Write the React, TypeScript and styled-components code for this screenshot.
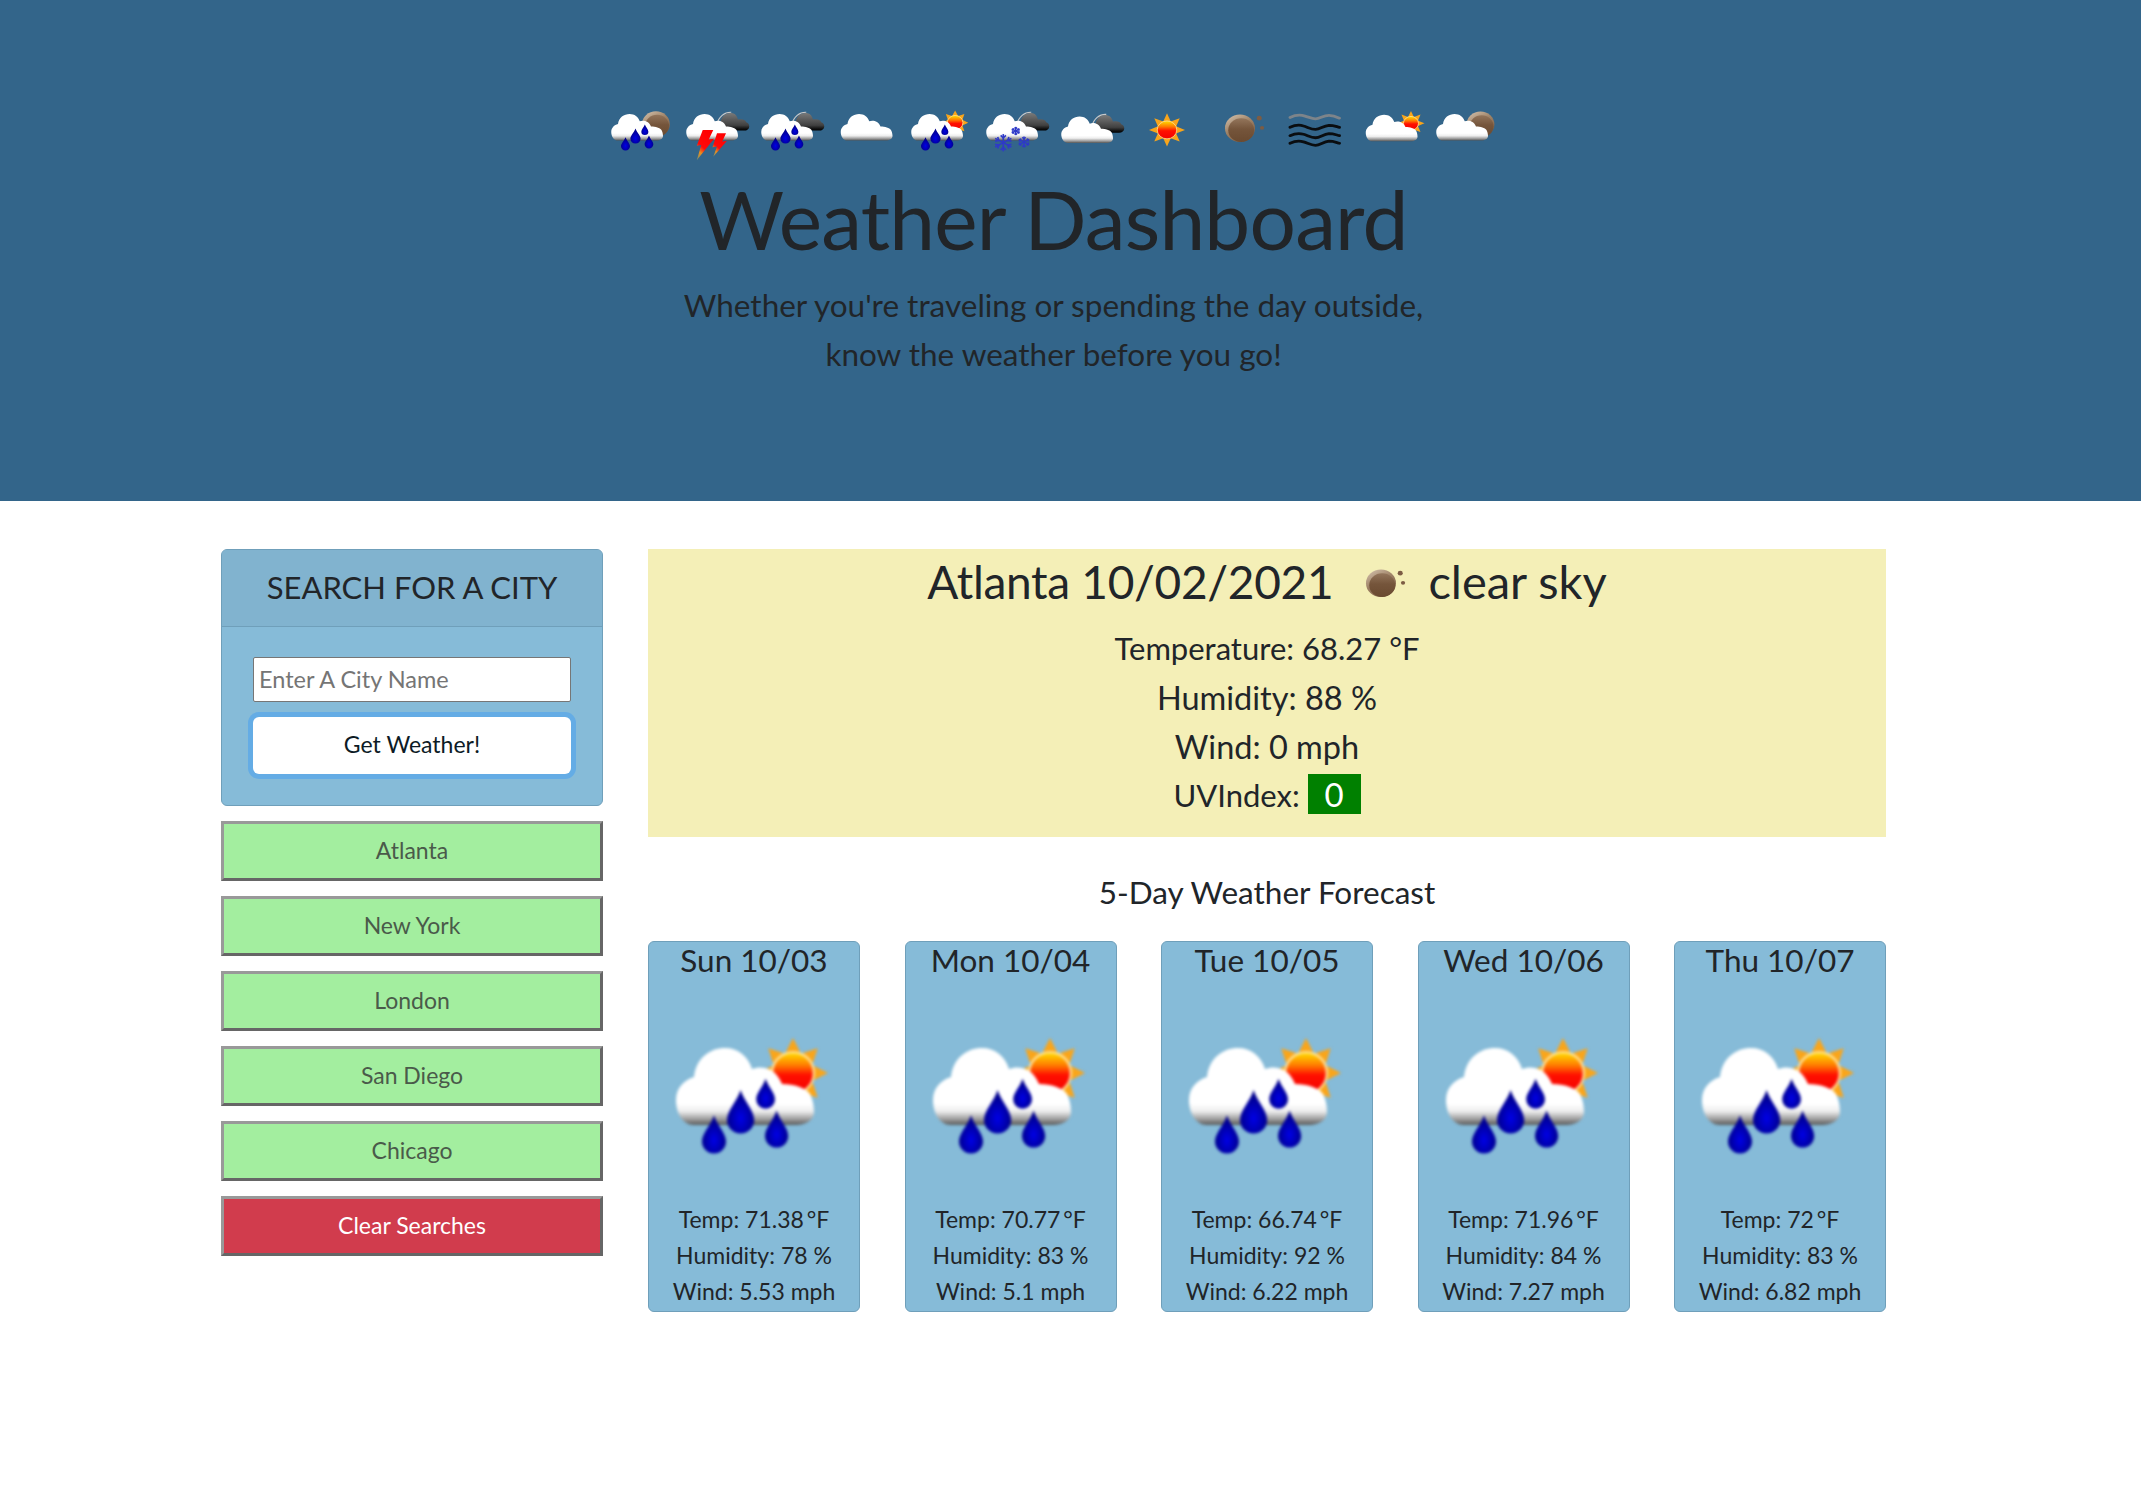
import { styled, createGlobalStyle } from "styled-components";

type IconKind = "10n" | "11d" | "09d" | "03d" | "10d" | "13d" | "04d" | "01d" | "01n" | "50d" | "02d" | "02n";

const headerIcons: IconKind[] = ["10n", "11d", "09d", "03d", "10d", "13d", "04d", "01d", "01n", "50d", "02d", "02n"];

const cities = ["Atlanta", "New York", "London", "San Diego", "Chicago"];

const forecast = [
  { date: "Sun 10/03", temp: "71.38", humidity: "78", wind: "5.53" },
  { date: "Mon 10/04", temp: "70.77", humidity: "83", wind: "5.1" },
  { date: "Tue 10/05", temp: "66.74", humidity: "92", wind: "6.22" },
  { date: "Wed 10/06", temp: "71.96", humidity: "84", wind: "7.27" },
  { date: "Thu 10/07", temp: "72", humidity: "83", wind: "6.82" },
];

const CLOUD =
  "M20 67.5 C14 67.5 11 61 11 55 C11 49 15 45 20 43.5 C21 34 28 29 35.5 29 C42 29 47 33 49 39.5 C54 37.5 61 39 64 47 C70 47 76 49 78 52 C80 56 80 60 80 61 C80 65 76 67.5 71 67.5 Z";
const DARK_CLOUD =
  "M56 53 C52 48 54 42 57 40 C58 31 66 26 73 28 C77 29 79 33 80 37 C85 36 90 37 91 41 C94 42 95 45 95 47 C95 51 92 53 88 53 Z";

const Drop = ({ x, y, r }: { x: number; y: number; r: number }) => (
  <path
    d={`M${x} ${y - r * 2.2} C${x + r * 0.3} ${y - r * 1.3} ${x + r} ${y - r * 0.7} ${x + r} ${y} A${r} ${r} 0 1 1 ${x - r} ${y} C${x - r} ${y - r * 0.7} ${x - r * 0.3} ${y - r * 1.3} ${x} ${y - r * 2.2} Z`}
    fill="url(#dropFill)"
  />
);

const Sun = ({ x, y, r, ray }: { x: number; y: number; r: number; ray: number }) => (
  <g>
    {[0, 45, 90, 135, 180, 225, 270, 315].map((a) => (
      <path
        key={a}
        d={`M${x - r * 0.42} ${y - r * 0.85} L${x} ${y - ray} L${x + r * 0.42} ${y - r * 0.85} Z`}
        fill="#f9a51a"
        transform={`rotate(${a} ${x} ${y})`}
      />
    ))}
    <circle cx={x} cy={y} r={r} fill="url(#sunFill)" stroke="#ffe9a8" strokeWidth="1" />
  </g>
);

const Moon = ({ x, y, r }: { x: number; y: number; r: number }) => (
  <g>
    <circle cx={x} cy={y} r={r} fill="url(#moonRim)" />
    <circle cx={x + r * 0.08} cy={y + r * 0.14} r={r * 0.86} fill="url(#moonFill)" />
  </g>
);

const Cloud = ({ dx = 0, dy = 0 }: { dx?: number; dy?: number }) => (
  <path d={CLOUD} fill="url(#cloudFill)" transform={`translate(${dx} ${dy})`} />
);

const DarkCloud = ({ dy = 0 }: { dy?: number }) => (
  <g transform={`translate(0 ${dy})`}>
    <path d="M52 44 C54 33 62 26 71 26.5" fill="none" stroke="#c9c9c9" strokeWidth="1.6" />
    <path d={DARK_CLOUD} fill="url(#darkFill)" />
  </g>
);

const Rain = () => (
  <g>
    <Drop x={43.3} y={65} r={6.8} />
    <Drop x={55.8} y={54.7} r={4.7} />
    <Drop x={61.3} y={73} r={5.8} />
    <Drop x={30} y={75.8} r={6} />
  </g>
);

const Flake = ({ x, y, r }: { x: number; y: number; r: number }) => (
  <g stroke="#2f3ac8" strokeWidth={r > 8 ? 2.2 : 2} fill="none">
    {[0, 60, 120, 180, 240, 300].map((a) => (
      <g key={a} transform={`rotate(${a} ${x} ${y})`}>
        <line x1={x} y1={y} x2={x} y2={y - r} />
        <path d={`M${x - r * 0.28} ${y - r * 0.85} L${x} ${y - r * 0.55} L${x + r * 0.28} ${y - r * 0.85}`} />
      </g>
    ))}
  </g>
);

const WeatherIcon = ({ kind }: { kind: IconKind }) => {
  switch (kind) {
    case "01d":
      return <Sun x={52} y={52} r={13} ray={24} />;
    case "01n":
      return (
        <g>
          <Moon x={49.3} y={49.7} r={20} />
          <circle cx={75} cy={35} r={3.4} fill="#7c5c44" />
          <circle cx={78.7} cy={49} r={2.8} fill="#7c5c44" />
        </g>
      );
    case "02d":
      return (
        <g>
          <Sun x={77.3} y={42.5} r={10} ray={18} />
          <Cloud dx={6} dy={1} />
        </g>
      );
    case "02n":
      return (
        <g>
          <Moon x={70} y={44} r={18.5} />
          <Cloud />
        </g>
      );
    case "03d":
      return <Cloud dx={6} />;
    case "04d":
      return (
        <g>
          <DarkCloud dy={3} />
          <Cloud dy={3.5} />
        </g>
      );
    case "09d":
      return (
        <g>
          <DarkCloud />
          <Cloud />
          <Rain />
        </g>
      );
    case "10d":
      return (
        <g>
          <Sun x={69.5} y={41.5} r={10.4} ray={17.5} />
          <Cloud />
          <Rain />
        </g>
      );
    case "10n":
      return (
        <g>
          <Moon x={70.6} y={43.5} r={18.5} />
          <Cloud />
          <Rain />
        </g>
      );
    case "11d":
      return (
        <g>
          <DarkCloud />
          <Cloud />
          <path d="M33 52 L47 52 L41 66 L48 65 L25 96 L31 74 L25 75 Z" fill="url(#boltFill)" />
          <path d="M52 57 L64 57 L59 69 L65 68 L47 91 L52 76 L46 77 Z" fill="url(#boltFill)" />
        </g>
      );
    case "13d":
      return (
        <g>
          <DarkCloud />
          <Cloud />
          <Flake x={33.7} y={70.6} r={12.5} />
          <Flake x={50.3} y={53.6} r={6} />
          <Flake x={61.3} y={69.6} r={8} />
        </g>
      );
    case "50d":
      return (
        <g fill="none" strokeLinecap="round">
          <path d="M16 34 C22 31 30 30 36 32 C42 34 46 36 50 36 C56 36 60 31 68 31 C74 31 78 33 82 35" stroke="#7d848a" strokeWidth="4" />
          {[48.3, 60.4, 71.4].map((y) => (
            <path
              key={y}
              d={`M16 ${y} C22 ${y - 3} 28 ${y - 4} 34 ${y - 2} C40 ${y} 44 ${y + 3} 50 ${y + 3} C56 ${y + 3} 60 ${y - 2} 68 ${y - 3} C74 ${y - 3} 78 ${y - 1} 82 ${y}`}
              stroke="#0a0d10"
              strokeWidth="4"
            />
          ))}
        </g>
      );
  }
};

const GlobalStyle = createGlobalStyle`
  * {
    box-sizing: border-box;
  }

  body {
    margin: 0;
    background: #fff;
    color: #212529;
    font-family: "Lato", "Open Sans", sans-serif;
    font-size: 23px;
    line-height: 1.5;
  }
`;

const Defs = styled.svg`
  position: absolute;
  width: 0;
  height: 0;
`;

const Hero = styled.header`
  height: 501px;
  padding-top: 94px;
  background: #33658a;
`;

const Container = styled.div`
  width: 1665px;
  margin-left: 221px;
`;

const HeroInner = styled(Container)`
  display: flex;
  flex-direction: column;
  align-items: center;
`;

const IconRow = styled.div`
  display: flex;
  height: 74px;
  margin-left: -2px;
`;

const Icon = styled.svg<{ $width: number; $height: number; $blur: number }>`
  display: block;
  flex: none;
  width: ${(p) => p.$width}px;
  height: ${(p) => p.$height}px;
  filter: blur(${(p) => p.$blur}px);
`;

const TitleIcon = styled(Icon)`
  margin: 4px 9px 0 11px;
`;

const CardIcon = styled(Icon)`
  margin: 11px 0 11px;
`;

const Title = styled.h1`
  margin: 0;
  font-size: 82px;
  font-weight: 400;
  letter-spacing: -0.8px;
  line-height: 100px;
`;

const Lead = styled.p`
  margin: 13px 0 0;
  font-size: 31.5px;
  line-height: 49px;
  text-align: center;
`;

const Content = styled(Container)`
  display: grid;
  grid-template-columns: 382px 1238px;
  column-gap: 45px;
  padding-top: 48px;
`;

const Sidebar = styled.aside`
  display: flex;
  flex-direction: column;
  gap: 15px;
`;

const SearchCard = styled.section`
  height: 257px;
  background: #86bbd8;
  border: 1px solid #6f9fba;
  border-radius: 6px;
  overflow: hidden;
`;

const SearchHeader = styled.h2`
  height: 77px;
  margin: 0;
  background: #81b3cf;
  border-bottom: 1px solid #6f9fba;
  font-size: 31px;
  font-weight: 400;
  line-height: 75px;
  text-align: center;
`;

const SearchBody = styled.div`
  display: flex;
  flex-direction: column;
  gap: 15px;
  padding: 30px 31px 0;
`;

const CityInput = styled.input`
  width: 100%;
  height: 45px;
  padding: 0 5px 2px;
  background: #fff;
  border: 1px solid #767676;
  border-radius: 2px;
  font: inherit;
  font-size: 23.5px;

  &::placeholder {
    color: #757575;
    opacity: 1;
  }
`;

const GetButton = styled.button`
  width: 100%;
  height: 57px;
  padding: 0 0 2px;
  background: #fff;
  border: 0;
  border-radius: 6px;
  box-shadow: 0 0 0 5px #64ace5;
  color: #0d1b25;
  font: inherit;
`;

const CityButton = styled.button<{ $danger?: boolean }>`
  width: 100%;
  height: 60px;
  padding: 0 0 2px;
  background: ${(p) => (p.$danger ? "#d13c4d" : "#a3ee9f")};
  border: 3px solid;
  border-color: #999 #666 #666 #999;
  color: ${(p) => (p.$danger ? "#fff" : "#4a5a4a")};
  font: inherit;
`;

const Main = styled.main`
  display: flex;
  flex-direction: column;
`;

const Current = styled.section`
  height: 288px;
  background: #f4efb7;
  text-align: center;
`;

const CurrentTitle = styled.h2`
  display: flex;
  justify-content: center;
  align-items: center;
  height: 64px;
  margin: 0 0 11px;
  font-size: 46px;
  font-weight: 400;
`;

const TitleDate = styled.span`
  letter-spacing: -0.3px;
`;

const TitleSky = styled.span`
  font-size: 47px;
`;

const CurrentLine = styled.p<{ $wide?: boolean }>`
  margin: 0;
  font-size: ${(p) => (p.$wide ? 32.5 : 31)}px;
  line-height: 49px;
`;

const UvBadge = styled.span`
  display: inline-block;
  width: 53px;
  height: 40px;
  background: #008000;
  color: #fff;
  font-size: 33px;
  line-height: 40px;
`;

const ForecastTitle = styled.h3`
  margin: 31px 0 25px;
  font-size: 31.5px;
  font-weight: 400;
  line-height: 48px;
  text-align: center;
`;

const ForecastGrid = styled.div`
  display: grid;
  grid-template-columns: repeat(5, 212px);
  justify-content: space-between;
`;

const ForecastCard = styled.article`
  display: flex;
  flex-direction: column;
  align-items: center;
  height: 371px;
  background: #86bbd8;
  border: 1px solid #6f9fba;
  border-radius: 6px;
  text-align: center;
`;

const ForecastDate = styled.h4`
  margin: 0;
  font-size: 31.5px;
  font-weight: 400;
  line-height: 37px;
`;

const ForecastLine = styled.p`
  margin: 0;
  font-size: 23px;
  line-height: 36px;
`;

export default function App() {
  return (
    <>
      <GlobalStyle />
      <Defs aria-hidden="true">
        <defs>
          <linearGradient id="cloudFill" x1="0" y1="0" x2="0" y2="1">
            <stop offset="0" stopColor="#ffffff" />
            <stop offset="0.72" stopColor="#ffffff" />
            <stop offset="0.82" stopColor="#eeeeee" />
            <stop offset="0.93" stopColor="#999999" />
            <stop offset="1" stopColor="#555555" />
          </linearGradient>
          <linearGradient id="darkFill" x1="0" y1="0" x2="0" y2="1">
            <stop offset="0" stopColor="#7a7a7a" />
            <stop offset="0.7" stopColor="#404040" />
            <stop offset="0.9" stopColor="#101010" />
            <stop offset="1" stopColor="#000000" />
          </linearGradient>
          <linearGradient id="sunFill" x1="0" y1="0" x2="0" y2="1">
            <stop offset="0" stopColor="#ffe000" />
            <stop offset="0.32" stopColor="#ff7a00" />
            <stop offset="0.55" stopColor="#ff0f00" />
            <stop offset="1" stopColor="#f20000" />
          </linearGradient>
          <linearGradient id="moonRim" x1="0" y1="0" x2="0.6" y2="1">
            <stop offset="0" stopColor="#d8c6b2" />
            <stop offset="0.5" stopColor="#a08468" />
            <stop offset="1" stopColor="#7a5a40" />
          </linearGradient>
          <linearGradient id="moonFill" x1="0" y1="0" x2="0" y2="1">
            <stop offset="0" stopColor="#93755b" />
            <stop offset="0.45" stopColor="#75553b" />
            <stop offset="1" stopColor="#6a4a30" />
          </linearGradient>
          <linearGradient id="boltFill" x1="0.7" y1="0" x2="0.2" y2="1">
            <stop offset="0" stopColor="#ff0000" />
            <stop offset="0.6" stopColor="#ff0a0a" />
            <stop offset="0.8" stopColor="#e89020" />
            <stop offset="1" stopColor="#8f9060" />
          </linearGradient>
          <radialGradient id="dropFill" cx="0.5" cy="0.65" r="0.5">
            <stop offset="0" stopColor="#0000e6" />
            <stop offset="1" stopColor="#00008f" />
          </radialGradient>
        </defs>
      </Defs>
      <Hero>
        <HeroInner>
          <IconRow>
            {headerIcons.map((kind) => (
              <Icon key={kind} viewBox="0 0 100 100" preserveAspectRatio="none" $width={75} $height={69} $blur={0.5}>
                <WeatherIcon kind={kind} />
              </Icon>
            ))}
          </IconRow>
          <Title>Weather Dashboard</Title>
          <Lead>
            Whether you're traveling or spending the day outside,
            <br />
            know the weather before you go!
          </Lead>
        </HeroInner>
      </Hero>
      <Content>
        <Sidebar>
          <SearchCard>
            <SearchHeader>SEARCH FOR A CITY</SearchHeader>
            <SearchBody>
              <CityInput placeholder="Enter A City Name" />
              <GetButton>Get Weather!</GetButton>
            </SearchBody>
          </SearchCard>
          {cities.map((city) => (
            <CityButton key={city}>{city}</CityButton>
          ))}
          <CityButton $danger>Clear Searches</CityButton>
        </Sidebar>
        <Main>
          <Current>
            <CurrentTitle>
              <TitleDate>Atlanta 10/02/2021</TitleDate>
              <TitleIcon viewBox="0 0 100 100" preserveAspectRatio="none" $width={75} $height={69} $blur={0.5}>
                <WeatherIcon kind="01n" />
              </TitleIcon>
              <TitleSky>clear sky</TitleSky>
            </CurrentTitle>
            <CurrentLine>Temperature: 68.27 °F</CurrentLine>
            <CurrentLine $wide>Humidity: 88 %</CurrentLine>
            <CurrentLine $wide>Wind: 0 mph</CurrentLine>
            <CurrentLine>
              UVIndex: <UvBadge>0</UvBadge>
            </CurrentLine>
          </Current>
          <ForecastTitle>5-Day Weather Forecast</ForecastTitle>
          <ForecastGrid>
            {forecast.map((day) => (
              <ForecastCard key={day.date}>
                <ForecastDate>{day.date}</ForecastDate>
                <CardIcon viewBox="0 0 100 100" $width={200} $height={200} $blur={1.8}>
                  <WeatherIcon kind="10d" />
                </CardIcon>
                <ForecastLine>Temp: {day.temp}{"\u2009"}°F</ForecastLine>
                <ForecastLine>Humidity: {day.humidity} %</ForecastLine>
                <ForecastLine>Wind: {day.wind} mph</ForecastLine>
              </ForecastCard>
            ))}
          </ForecastGrid>
        </Main>
      </Content>
    </>
  );
}
